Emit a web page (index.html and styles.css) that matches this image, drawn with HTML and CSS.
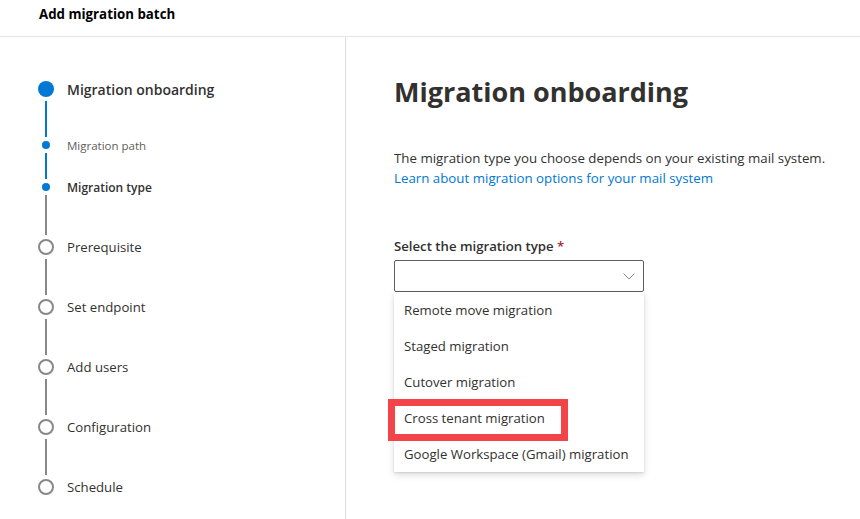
FILE: index.html
```html
<!DOCTYPE html>
<html lang="en">
<head>
<meta charset="utf-8">
<title>Add migration batch</title>
<link rel="stylesheet" href="styles.css">
</head>
<body>
<div class="app">
  <header class="topbar">Add migration batch</header>
  <div class="main">
    <nav class="stepper">
      <ol class="steps">
        <li class="step step-big step-done h60">
          <div class="rail"><span class="dot dot-current"></span><span class="line line-blue"></span></div>
          <div class="label label-main">Migration onboarding</div>
        </li>
        <li class="step step-small h42">
          <div class="rail"><span class="dot dot-small"></span><span class="line line-blue"></span></div>
          <div class="label label-sub">Migration path</div>
        </li>
        <li class="step step-small h56">
          <div class="rail"><span class="dot dot-small"></span><span class="line"></span></div>
          <div class="label label-sub label-active">Migration type</div>
        </li>
        <li class="step step-big h60">
          <div class="rail"><span class="dot dot-empty"></span><span class="line"></span></div>
          <div class="label">Prerequisite</div>
        </li>
        <li class="step step-big h60">
          <div class="rail"><span class="dot dot-empty"></span><span class="line"></span></div>
          <div class="label">Set endpoint</div>
        </li>
        <li class="step step-big h60">
          <div class="rail"><span class="dot dot-empty"></span><span class="line"></span></div>
          <div class="label">Add users</div>
        </li>
        <li class="step step-big h60">
          <div class="rail"><span class="dot dot-empty"></span><span class="line"></span></div>
          <div class="label">Configuration</div>
        </li>
        <li class="step step-big">
          <div class="rail"><span class="dot dot-empty"></span></div>
          <div class="label">Schedule</div>
        </li>
      </ol>
    </nav>
    <section class="content">
      <h1 class="title">Migration onboarding</h1>
      <p class="desc">The migration type you choose depends on your existing mail system.<br><a class="link" href="#">Learn about migration options for your mail system</a></p>
      <label class="field-label">Select the migration type <span class="req">*</span></label>
      <div class="dropdown">
        <div class="select">
          <svg class="chev" width="12" height="7" viewBox="0 0 12 7"><path d="M0.5 0.5 L6 6 L11.5 0.5" fill="none" stroke="#8a8886" stroke-width="1"/></svg>
        </div>
        <ul class="options">
          <li class="option">Remote move migration</li>
          <li class="option">Staged migration</li>
          <li class="option">Cutover migration</li>
          <li class="option option-marked">Cross tenant migration<span class="callout"></span></li>
          <li class="option">Google Workspace (Gmail) migration</li>
        </ul>
      </div>
    </section>
  </div>
</div>
</body>
</html>
```
FILE: styles.css
```css
* { box-sizing: border-box; }
html, body { margin: 0; padding: 0; background: #fff; }
body {
  font-family: "Open Sans", "Noto Sans", "Liberation Sans", sans-serif;
  color: #323130;
  width: 860px;
  height: 519px;
  overflow: hidden;
}
.app { display: flex; flex-direction: column; height: 519px; }
.topbar {
  height: 37px;
  padding: 4px 0 0 39px;
  line-height: 20px;
  font-size: 13.3px;
  font-weight: 700;
  color: #000;
  border-bottom: 1px solid #e6e6e6;
  flex: none;
}
.main { display: flex; flex: 1; min-height: 0; }
.stepper {
  width: 346px;
  flex: none;
  border-right: 1px solid #e1dfdd;
  padding: 44px 0 0 38px;
}
.steps { list-style: none; margin: 0; padding: 0; }
.step { display: flex; align-items: flex-start; }
.h60 { height: 60px; }
.h42 { height: 42px; }
.h56 { height: 56px; }
.rail {
  width: 16px;
  height: 100%;
  display: flex;
  flex-direction: column;
  align-items: center;
  flex: none;
}
.dot { display: block; flex: none; border-radius: 50%; }
.dot-current { width: 16px; height: 16px; background: #0078d4; }
.dot-small { width: 8px; height: 8px; background: #0078d4; }
.dot-empty { width: 16px; height: 16px; border: 2px solid #8a8886; background: #fff; }
.line { flex: 1; width: 2px; background: #8a8886; margin: 4px 0; }
.line-blue { background: #0078d4; }
.label {
  margin-left: 13px;
  font-size: 13.2px;
  color: #323130;
  display: flex;
  align-items: center;
  white-space: nowrap;
}
.step-big .label { height: 16px; }
.step-small .label { height: 8px; }
.label-main { font-weight: 600; font-size: 14px; }
.label-sub { font-size: 11.5px; color: #605e5c; }
.label-active { font-weight: 600; font-size: 12px; color: #323130; }

.content { flex: 1; padding: 37px 0 0 48px; }
.title {
  margin: 0;
  font-size: 27px;
  line-height: 36px;
  font-weight: 700;
  color: #323130;
}
.desc {
  margin: 38px 0 0;
  font-size: 13.3px;
  line-height: 20px;
  color: #323130;
}
.link { color: #0078d4; text-decoration: none; }
.field-label {
  display: block;
  margin-top: 48px;
  font-size: 13.2px;
  line-height: 20px;
  font-weight: 600;
  color: #323130;
}
.req { color: #a4262c; }
.dropdown { width: 250px; margin-top: 4px; }
.select {
  height: 32px;
  border: 1px solid #605e5c;
  border-radius: 2px;
  display: flex;
  align-items: center;
  justify-content: flex-end;
  padding-right: 8px;
}
.chev { display: block; }
.options {
  list-style: none;
  margin: 0;
  padding: 0;
  background: #fff;
  box-shadow: 0 3.2px 7.2px rgba(0,0,0,0.132), 0 0.6px 1.8px rgba(0,0,0,0.108);
}
.option {
  height: 36px;
  line-height: 36px;
  padding-left: 10px;
  font-size: 13.2px;
  color: #323130;
  white-space: nowrap;
}
.option-marked { position: relative; }
.callout {
  position: absolute;
  left: -6px;
  top: -1px;
  width: 180px;
  height: 42px;
  border: 7px solid #f3444a;
}
```
